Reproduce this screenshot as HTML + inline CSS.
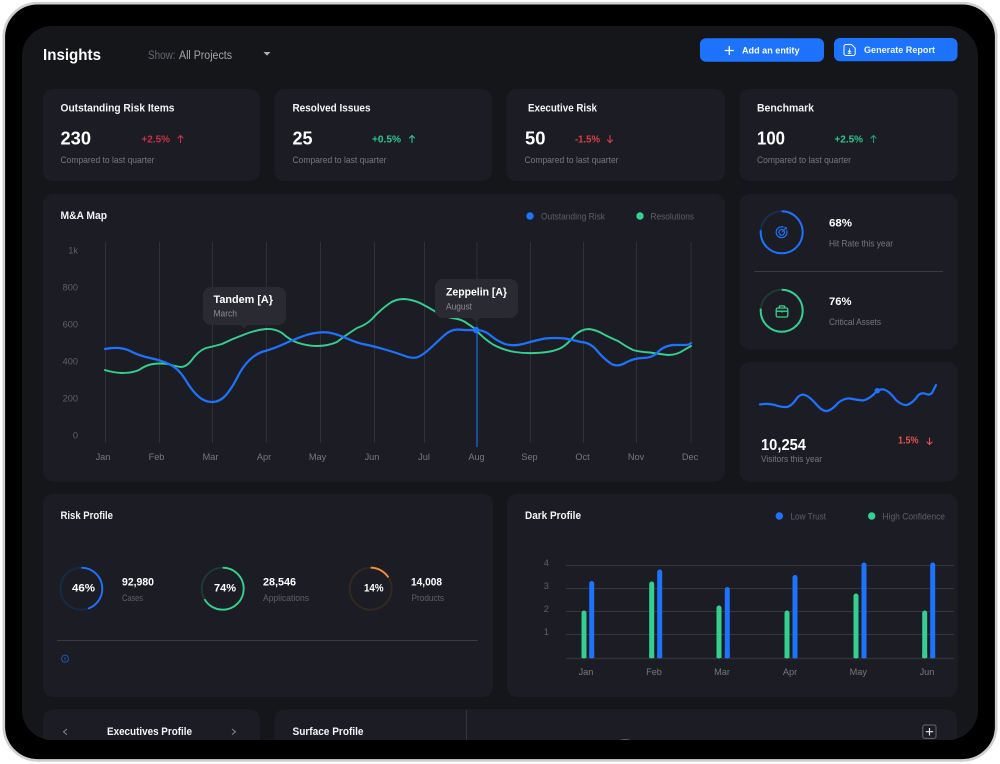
<!DOCTYPE html>
<html lang="en">
<head>
<meta charset="utf-8">
<title>Insights</title>
<style>
html,body{margin:0;padding:0;background:#fff;width:1000px;height:764px;overflow:hidden}
svg{display:block;filter:blur(.3px)}
text{font-family:"Liberation Sans",sans-serif}
.t{font-weight:700;fill:#f4f4f6;font-size:10.7px}
.s{fill:#77787e;font-size:9.2px}
.d{fill:#5f6066;font-size:9.2px}
.b{font-weight:700;fill:#fff}
.g{stroke:#303138;stroke-width:1;fill:none}
.a{fill:none;stroke-width:1.1;stroke-linecap:round;stroke-linejoin:round}
</style>
</head>
<body>
<svg width="1000" height="764" viewBox="0 0 1000 764" xmlns="http://www.w3.org/2000/svg">
<defs>
<clipPath id="scr"><rect x="22" y="26" width="956" height="714" rx="30"/></clipPath>
</defs>
<rect x="0" y="0" width="1000" height="764" fill="#fff"/>
<rect x="3.8" y="3.2" width="992.4" height="757.2" rx="34" fill="#000" stroke="#cfcfcf" stroke-width="2.6"/>
<g clip-path="url(#scr)">
<rect x="22" y="26" width="956" height="714" fill="#15161a"/>

<!-- header -->
<text class="b" x="43" y="60" font-size="16" textLength="58" lengthAdjust="spacingAndGlyphs">Insights</text>
<text x="148" y="59" font-size="11.5" fill="#66676d" textLength="27.5" lengthAdjust="spacingAndGlyphs">Show:</text>
<text x="179" y="59" font-size="11.5" fill="#a4a5aa" textLength="53" lengthAdjust="spacingAndGlyphs">All Projects</text>
<path d="M263.5 52h7l-3.5 3.6z" fill="#b0b1b5"/>

<rect x="700" y="38.3" width="124" height="23.4" rx="6" fill="#1e73fc"/>
<path d="M729.3 46v9M724.8 50.5h9" stroke="#fff" stroke-width="1.3" fill="none"/>
<text class="b" x="742" y="53.3" font-size="9.5" textLength="57.5" lengthAdjust="spacingAndGlyphs">Add an entity</text>
<rect x="834" y="38" width="123.5" height="23.2" rx="6" fill="#1e73fc"/>
<path d="M846 44.5h5.5l3.7 3.7v5.3a2 2 0 0 1-2 2h-7.2a2 2 0 0 1-2-2v-7a2 2 0 0 1 2-2z" fill="none" stroke="#fff" stroke-width="1"/>
<path d="M849.500 48.500v3.600M848 50.800l1.500 1.500 1.500-1.500M847.800 53.300h3.400" fill="none" stroke="#fff" stroke-width=".8"/>
<text class="b" x="864" y="52.800" font-size="9.500" fill-opacity=".92" textLength="71" lengthAdjust="spacingAndGlyphs">Generate Report</text>

<!-- cards -->
<g fill="#1c1d24">
<rect x="43" y="89" width="217" height="92" rx="10"/>
<rect x="274.500" y="89" width="217.500" height="92" rx="10"/>
<rect x="506.500" y="89" width="218.500" height="92" rx="10"/>
<rect x="739.500" y="89" width="218" height="92" rx="10"/>
<rect x="43" y="194" width="682" height="287.500" rx="10"/>
<rect x="739.500" y="194" width="218" height="155.500" rx="10"/>
<rect x="739.500" y="362" width="218" height="119.500" rx="10"/>
<rect x="43" y="494" width="450" height="203" rx="10"/>
<rect x="507" y="494" width="450.500" height="203" rx="10"/>
<rect x="43" y="709.500" width="217" height="60" rx="10"/>
<rect x="274.500" y="709.500" width="682.500" height="60" rx="10"/>
</g>

<!-- row 1 -->
<text class="t" x="60.500" y="111.500" textLength="114" lengthAdjust="spacingAndGlyphs">Outstanding Risk Items</text>
<text class="b" x="60.500" y="144.500" font-size="18" textLength="30.500" lengthAdjust="spacingAndGlyphs">230</text>
<text x="141.500" y="142.300" font-size="9.800" font-weight="700" fill="#c9304a" textLength="28.500" lengthAdjust="spacingAndGlyphs">+2.5%</text>
<path class="a" stroke="#c9304a" d="M180.500 142.500v-7M178 138l2.500-2.500 2.500 2.500"/>
<text class="s" x="60.500" y="163" textLength="94" lengthAdjust="spacingAndGlyphs">Compared to last quarter</text>

<text class="t" x="292.500" y="111.500" textLength="78" lengthAdjust="spacingAndGlyphs">Resolved Issues</text>
<text class="b" x="292.500" y="144.500" font-size="18" textLength="20" lengthAdjust="spacingAndGlyphs">25</text>
<text x="372" y="142.300" font-size="9.800" font-weight="700" fill="#2ec78c" textLength="29" lengthAdjust="spacingAndGlyphs">+0.5%</text>
<path class="a" stroke="#2ec78c" d="M412 142.500v-7M409.500 138l2.500-2.500 2.500 2.500"/>
<text class="s" x="292.500" y="163" textLength="94" lengthAdjust="spacingAndGlyphs">Compared to last quarter</text>

<text class="t" x="528" y="111.500" textLength="69" lengthAdjust="spacingAndGlyphs">Executive Risk</text>
<text class="b" x="525" y="144.500" font-size="18" textLength="20.500" lengthAdjust="spacingAndGlyphs">50</text>
<text x="575" y="142.300" font-size="9.800" font-weight="700" fill="#dd3f48" textLength="25" lengthAdjust="spacingAndGlyphs">-1.5%</text>
<path class="a" stroke="#dd3f48" d="M610 135.500v7M607.500 140l2.500 2.500 2.500-2.500"/>
<text class="s" x="524.500" y="163" textLength="94" lengthAdjust="spacingAndGlyphs">Compared to last quarter</text>

<text class="t" x="757" y="111.500" textLength="57" lengthAdjust="spacingAndGlyphs">Benchmark</text>
<text class="b" x="757" y="144.500" font-size="18" textLength="28" lengthAdjust="spacingAndGlyphs">100</text>
<text x="834.500" y="142.300" font-size="9.800" font-weight="700" fill="#2ec78c" textLength="28.500" lengthAdjust="spacingAndGlyphs">+2.5%</text>
<path class="a" stroke="#259c70" d="M873.500 142.500v-7M871 138l2.500-2.500 2.500 2.500"/>
<text class="s" x="757" y="163" textLength="94" lengthAdjust="spacingAndGlyphs">Compared to last quarter</text>

<!-- M&A Map -->
<text class="t" x="60.500" y="219" textLength="46.500" lengthAdjust="spacingAndGlyphs">M&amp;A Map</text>
<circle cx="530" cy="216" r="3.700" fill="#1e73fc"/>
<text class="d" x="541" y="219.500" textLength="64" lengthAdjust="spacingAndGlyphs">Outstanding Risk</text>
<circle cx="640" cy="216" r="3.700" fill="#35d08f"/>
<text class="d" x="650.500" y="219.500" textLength="43.500" lengthAdjust="spacingAndGlyphs">Resolutions</text>

<path class="g" d="M105.500 242V443M159.500 242V443M212.500 242V443M266.500 242V443M320.500 242V443M374.500 242V443M424.500 242V443M477 242V330M530.500 242V443M583.500 242V443M636.500 242V443M691 242V443"/>
<path d="M477 330V447" stroke="#1a5cc4" stroke-width="1.500" fill="none"/>

<g class="d" text-anchor="end">
<text x="78" y="253.500">1k</text>
<text x="78" y="290.500">800</text>
<text x="78" y="327.500">600</text>
<text x="78" y="364.500">400</text>
<text x="78" y="401.500">200</text>
<text x="78" y="438.500">0</text>
</g>
<g class="s" text-anchor="middle" fill="#6a6b71">
<text x="103" y="460">Jan</text>
<text x="156.500" y="460">Feb</text>
<text x="210.500" y="460">Mar</text>
<text x="264" y="460">Apr</text>
<text x="317.500" y="460">May</text>
<text x="372" y="460">Jun</text>
<text x="424" y="460">Jul</text>
<text x="476.500" y="460">Aug</text>
<text x="529.500" y="460">Sep</text>
<text x="582.500" y="460">Oct</text>
<text x="636" y="460">Nov</text>
<text x="690" y="460">Dec</text>
</g>

<path fill="none" stroke="#35d08f" stroke-width="1.900" stroke-linecap="round" d="M105 370Q112 372.500 122 373Q132 373 139 370Q146 365 153 364Q160 363 168 364Q176 366.500 181 367Q186 367 191 361Q198 351 206 348Q213 346.500 222 344Q232 339 243 335Q255 330 266 329Q275 328.500 282 333Q290 340 297 342.500Q307 346 317 346Q328 346 337 342Q346 335 357 328Q366 325 372 319Q380 310 390 303Q396 299 404 299Q412 299.500 420 303Q428 307 436 312Q443 316 452 318Q462 319 468 324Q473 327 476 330Q483 338 493 344.500Q503 350 515 352Q525 353.500 535 353Q552 352.500 561 348Q568 344 574 336Q581 329 589 329Q597 330 605 335Q613 339 618 341Q625 346 633 350Q640 352 650 352.500Q660 354 668 355Q677 355 684 350L691 346"/>
<path fill="none" stroke="#1e73fc" stroke-width="2.200" stroke-linecap="round" d="M105 349Q120 346 130 351Q140 356 150 358Q160 360 169 364Q178 368 185 379Q192 391 199 397Q205 402 212 402Q220 402 226 395Q232 388 237 378Q243 366 250 359.500Q257 353 265 351Q273 349 285 343.500Q297 338 308 334.500Q320 331.500 328.500 332.500Q337 334 347 338.500Q357 343 365 344.500Q373 346 385 349.500Q397 353 405 356Q413 359 418 357Q423 355 430 348.500Q437 342 443.500 336Q450 329.500 458 329.500Q468 330.500 476 330Q484 330 490 335Q497 341 505 344Q513 346.500 523 344Q535 340.500 545 338.500Q555 337.500 565 338.500Q573 340 581 342Q590 342.500 596 349.500Q603 358 610 363Q617 368 626 362.500Q633 358.500 642 358Q652 358 657 353Q663 346 673 345L685 345Q689 345 691 343"/>
<circle cx="476" cy="330" r="3.200" fill="#1e73fc"/>

<!-- tooltips -->
<path d="M211 287h67a8 8 0 0 1 8 8v22a8 8 0 0 1-8 8h-30l-4 3.500-4-3.500h-29a8 8 0 0 1-8-8v-22a8 8 0 0 1 8-8z" fill="#2a2b32"/>
<text class="b" x="213.500" y="303" font-size="10.700" textLength="59.500" lengthAdjust="spacingAndGlyphs">Tandem [A}</text>
<text x="213.500" y="316.500" font-size="8.800" fill="#8a8b91" textLength="23.500" lengthAdjust="spacingAndGlyphs">March</text>
<path d="M443 279h67a8 8 0 0 1 8 8v23a8 8 0 0 1-8 8h-30l-4 3.500-4-3.500h-29a8 8 0 0 1-8-8v-23a8 8 0 0 1 8-8z" fill="#2a2b32"/>
<text class="b" x="446" y="295.500" font-size="10.700" textLength="61" lengthAdjust="spacingAndGlyphs">Zeppelin [A}</text>
<text x="446" y="309.700" font-size="8.800" fill="#8a8b91" textLength="26" lengthAdjust="spacingAndGlyphs">August</text>

<!-- Right top card -->
<circle cx="781.700" cy="232.300" r="21" fill="none" stroke="#17304f" stroke-width="2"/>
<circle cx="781.700" cy="232.300" r="21" fill="none" stroke="#1e73fc" stroke-width="2" pathLength="100" stroke-dasharray="77 100" transform="rotate(-90 781.700 232.300)"/>
<g fill="none" stroke="#1e73fc" stroke-width="1.200">
<path d="M786.600 230.200a5.400 5.400 0 1 1-3-3"/>
<circle cx="781.700" cy="232.300" r="2.800"/>
<path d="M781.700 232.300l5-5M785 226.800v2h2" stroke-width="1"/>
</g>
<text class="b" x="829" y="226.700" font-size="10.700" textLength="23" lengthAdjust="spacingAndGlyphs">68%</text>
<text class="s" x="829" y="246.700" textLength="64" lengthAdjust="spacingAndGlyphs">Hit Rate this year</text>
<path d="M754 271.500H943" stroke="#3a3b41" stroke-width="1"/>
<circle cx="781.700" cy="310.700" r="21" fill="none" stroke="#1e3a33" stroke-width="2"/>
<circle cx="781.700" cy="310.700" r="21" fill="none" stroke="#35d08f" stroke-width="2" pathLength="100" stroke-dasharray="77 100" transform="rotate(-90 781.700 310.700)"/>
<g fill="none" stroke="#35d08f" stroke-width="1.300">
<rect x="776.200" y="308" width="11.600" height="9" rx="1.500"/>
<path d="M779.300 308v-1.300a.8.8 0 0 1 .8-.8h3.800a.8.8 0 0 1 .8.8V308M776.200 311.200h11.600"/>
<path d="M782 310.500v2" stroke-width="1.500"/>
</g>
<text class="b" x="829" y="305" font-size="10.700" textLength="22.500" lengthAdjust="spacingAndGlyphs">76%</text>
<text class="s" x="829" y="325" textLength="52" lengthAdjust="spacingAndGlyphs">Critical Assets</text>

<!-- Right bottom card -->
<path fill="none" stroke="#1e73fc" stroke-width="2.200" stroke-linecap="round" d="M760 404.500Q767 403 775 405Q782 407.500 787 407Q792 406 797 398Q801 393.500 805 395Q810 397 816 404Q822 411 826 411Q831 411 838 403Q844 398 850 398.500Q857 400 863 400.500Q870 399 877 391Q880 389 884 389.500Q889 391 896 400Q902 405.500 907 405Q913 403 918 395.500Q922 392 926 394Q931 396 933 391L936 385"/>
<circle cx="877.300" cy="390.700" r="2.700" fill="#1e73fc"/>
<text class="b" x="761" y="450" font-size="15.500" textLength="45" lengthAdjust="spacingAndGlyphs">10,254</text>
<text class="s" x="761" y="462" textLength="61" lengthAdjust="spacingAndGlyphs">Visitors this year</text>
<text x="898" y="443.700" font-size="10.500" font-weight="700" fill="#e8504e" textLength="20.500" lengthAdjust="spacingAndGlyphs">1.5%</text>
<path class="a" stroke="#e8504e" d="M929.500 438v6.500M927 442l2.500 2.500 2.500-2.500"/>

<!-- Risk Profile -->
<text class="t" x="60.500" y="519" textLength="52.500" lengthAdjust="spacingAndGlyphs">Risk Profile</text>
<circle cx="81.300" cy="588.700" r="21" fill="none" stroke="#172a47" stroke-width="1.900"/>
<circle cx="81.300" cy="588.700" r="21" fill="none" stroke="#1e73fc" stroke-width="1.900" pathLength="100" stroke-dasharray="45 100" transform="rotate(-90 81.300 588.700)"/>
<text class="b" x="72" y="591.700" font-size="11.200" textLength="23" lengthAdjust="spacingAndGlyphs">46%</text>
<text class="b" x="122" y="585.700" font-size="10.700" textLength="32" lengthAdjust="spacingAndGlyphs" fill="#f0f0f2">92,980</text>
<text class="d" x="122" y="601" fill="#55565c" textLength="21" lengthAdjust="spacingAndGlyphs">Cases</text>

<circle cx="222.700" cy="588.700" r="21" fill="none" stroke="#1f3a32" stroke-width="1.900"/>
<circle cx="222.700" cy="588.700" r="21" fill="none" stroke="#35d08f" stroke-width="1.900" pathLength="100" stroke-dasharray="67 100" transform="rotate(-90 222.700 588.700)"/>
<text class="b" x="214" y="591.700" font-size="11.200" textLength="22" lengthAdjust="spacingAndGlyphs">74%</text>
<text class="b" x="263" y="585.700" font-size="10.700" textLength="33" lengthAdjust="spacingAndGlyphs" fill="#f0f0f2">28,546</text>
<text class="d" x="263" y="601" fill="#55565c" textLength="46" lengthAdjust="spacingAndGlyphs">Applications</text>

<circle cx="370.700" cy="588.700" r="21" fill="none" stroke="#33291f" stroke-width="1.900"/>
<circle cx="370.700" cy="588.700" r="21" fill="none" stroke="#f0923a" stroke-width="1.900" pathLength="100" stroke-dasharray="16 100" transform="rotate(-90 370.700 588.700)"/>
<text class="b" x="364" y="591.700" font-size="11.200" textLength="19.500" lengthAdjust="spacingAndGlyphs">14%</text>
<text class="b" x="411" y="585.700" font-size="10.700" textLength="31" lengthAdjust="spacingAndGlyphs" fill="#f0f0f2">14,008</text>
<text class="d" x="411.500" y="601" fill="#55565c" textLength="32.500" lengthAdjust="spacingAndGlyphs">Products</text>

<path d="M57 640.500H478" stroke="#3a3b41" stroke-width="1"/>
<circle cx="65" cy="658.700" r="3.500" fill="none" stroke="#1e4da8" stroke-width="1.100"/>
<path d="M65 657v3.500" stroke="#1e4da8" stroke-width="1"/>

<!-- Dark Profile -->
<text class="t" x="525" y="519" textLength="56" lengthAdjust="spacingAndGlyphs">Dark Profile</text>
<circle cx="779.300" cy="516" r="3.700" fill="#1e73fc"/>
<text class="d" x="790.500" y="519.500" textLength="35.500" lengthAdjust="spacingAndGlyphs">Low Trust</text>
<circle cx="871.700" cy="516" r="3.700" fill="#35d08f"/>
<text class="d" x="882.500" y="519.500" textLength="62.500" lengthAdjust="spacingAndGlyphs">High Confidence</text>
<path d="M566 565.500H954M566 588.500H954M566 611.500H954M566 634.500H954" stroke="#37383e" stroke-width="1"/>
<path d="M566 658.500H954" stroke="#303138" stroke-width="1.500"/>
<g class="d" text-anchor="middle" fill="#77787e">
<text x="546.300" y="566">4</text>
<text x="546.300" y="589">3</text>
<text x="546.300" y="612">2</text>
<text x="546.300" y="635">1</text>
</g>
<path fill="none" stroke="#35d08f" stroke-width="5" stroke-linecap="round" d="M584 613V656M651.700 584V656M719 608V656M787 613V656M856 596V656M924.700 613V656"/>
<path fill="none" stroke="#35d08f" stroke-width="5" d="M584 654V658M651.700 654V658M719 654V658M787 654V658M856 654V658M924.700 654V658"/>
<path fill="none" stroke="#1e73fc" stroke-width="5" stroke-linecap="round" d="M591.700 583.500V656M659.700 572V656M727.300 589.500V656M795 577.500V656M864 565V656M932.700 565V656"/>
<path fill="none" stroke="#1e73fc" stroke-width="5" d="M591.700 654V658M659.700 654V658M727.300 654V658M795 654V658M864 654V658M932.700 654V658"/>
<g class="s" text-anchor="middle">
<text x="586" y="675">Jan</text>
<text x="654" y="675">Feb</text>
<text x="722" y="675">Mar</text>
<text x="790" y="675">Apr</text>
<text x="858.300" y="675">May</text>
<text x="927" y="675">Jun</text>
</g>

<!-- bottom row -->
<path d="M67 729l-3.500 2.800 3.500 2.800M232 729l3.500 2.800-3.500 2.800" fill="none" stroke="#85868c" stroke-width="1"/>
<text class="t" x="107" y="735" textLength="85" lengthAdjust="spacingAndGlyphs">Executives Profile</text>
<text class="t" x="292.500" y="735" textLength="71" lengthAdjust="spacingAndGlyphs">Surface Profile</text>
<path d="M466.500 709.500V740" stroke="#34353b" stroke-width="1"/>
<rect x="922.800" y="725" width="13.200" height="13.400" rx="2" fill="none" stroke="#66676d" stroke-width="1"/>
<path d="M929.500 728v7.500M925.800 731.700h7.400" stroke="#e4e4e6" stroke-width="1.200" fill="none"/>
<ellipse cx="625" cy="741" rx="6.500" ry="2" fill="#5a5b60"/>
</g>
</svg>
</body>
</html>
